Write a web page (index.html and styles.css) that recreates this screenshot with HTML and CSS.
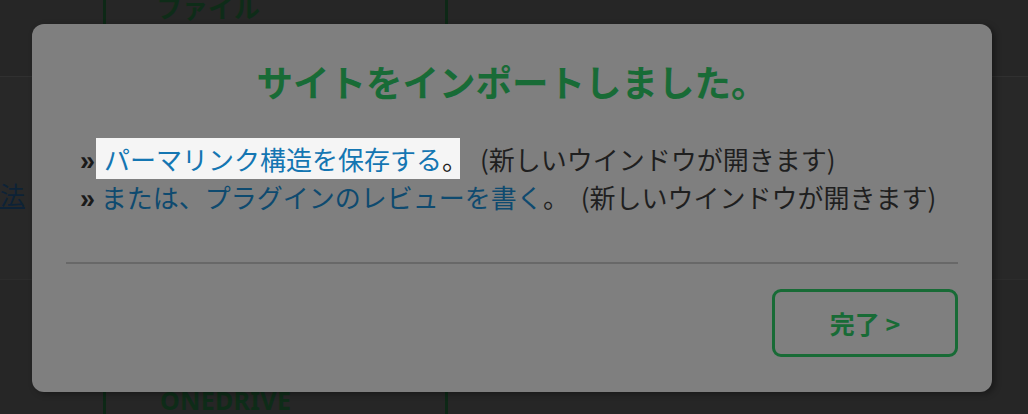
FILE: index.html
```html
<!DOCTYPE html>
<html lang="ja">
<head>
<meta charset="utf-8">
<title>サイトをインポートしました</title>
<link rel="stylesheet" href="styles.css">
</head>
<body>
<div class="page">
  <div class="row row-top">
    <div class="cell"></div>
    <div class="cell mid"><span class="bg-label">ファイル</span></div>
    <div class="cell"></div>
  </div>
  <div class="row row-mid">
    <div class="cell"><a class="bg-link" href="#">方法</a></div>
    <div class="cell mid"></div>
    <div class="cell"></div>
  </div>
  <div class="row row-bot">
    <div class="cell"></div>
    <div class="cell mid"><span class="bg-label latin">ONEDRIVE</span></div>
    <div class="cell"></div>
  </div>
</div>

<div class="modal" role="dialog">
  <h2 class="title">サイトをインポートしました。</h2>
  <ul class="links">
    <li><span class="raquo">»</span><span class="hl"><a class="link focus" href="#">パーマリンク構造を保存する</a><span class="stop">。</span></span> <span class="note">(新しいウインドウが開きます)</span></li>
    <li><span class="raquo">»</span> <a class="link" href="#">または、プラグインのレビューを書く</a>。 <span class="note">(新しいウインドウが開きます)</span></li>
  </ul>
  <hr class="divider">
  <div class="footer">
    <button class="done" type="button">完了 &gt;</button>
  </div>
</div>
</body>
</html>
```

FILE: styles.css
```css
html, body {
  margin: 0;
  padding: 0;
}
body {
  width: 1028px;
  height: 414px;
  overflow: hidden;
  background: #262626;
  font-family: "Noto Sans CJK JP", "Noto Sans", sans-serif;
  position: relative;
}

/* background page */
.page {
  display: flex;
  flex-direction: column;
}
.row {
  display: grid;
  grid-template-columns: 103px 345px 1fr;
}
.row-top { height: 76px; border-bottom: 1px solid #303030; }
.row-mid { height: 202px; border-bottom: 1px solid #2c2c2c; background: #282828; }
.row-bot { height: 134px; }
.cell { display: flex; }
.mid {
  border-left: 3px solid #0d2816;
  border-right: 3px solid #0d2816;
  padding-left: 50px;
}
.row-top .mid { align-items: flex-start; }
.row-bot .mid { align-items: flex-end; }
.bg-label {
  font-size: 26px;
  font-weight: 700;
  color: #0e2c18;
  line-height: 1;
  margin-top: -6px;
}
.bg-label.latin {
  font-family: "Noto Sans", sans-serif;
  font-size: 25px;
  letter-spacing: 0.3px;
  margin-bottom: 1px;
  margin-left: 4px;
}
.row-mid .cell:first-child { align-items: flex-start; }
.bg-link {
  font-size: 25px;
  line-height: 1;
  color: #0d2236;
  margin-left: -25px;
  margin-top: 105px;
  text-decoration: underline;
}

/* modal */
.modal {
  position: absolute;
  left: 32px;
  top: 24px;
  width: 960px;
  box-sizing: border-box;
  padding: 37px 34px 35px;
  background: #7f7f7f;
  border-radius: 12px;
  box-shadow: 3px 2px 6px rgba(0,0,0,0.35);
  display: flex;
  flex-direction: column;
}
.title {
  margin: 0;
  text-align: center;
  font-size: 36.5px;
  line-height: 42px;
  font-weight: 700;
  color: #186b36;
}
.links {
  list-style: none;
  margin: 37px 0 0 14px;
  padding: 0;
  font-size: 26px;
  line-height: 38px;
  color: #1f1f1f;
}
.raquo {
  font-family: "Liberation Sans", sans-serif;
  font-weight: 700;
  font-size: 27px;
  line-height: 20px;
  color: #1a1a1a;
}
.link {
  color: #0e4a6f;
  text-decoration: none;
}
.hl {
  background: #f5f5f5;
  padding: 2px 0 2px 8px;
  margin-left: 1px;
  margin-right: 8px;
}
.link.focus {
  color: #1476b2;
}
.stop {
  margin-right: -8px;
}
.note {
  margin-left: 6px;
}
.divider {
  margin: 46px 0 0;
  border: 0;
  height: 2px;
  background: #686868;
}
.footer {
  display: flex;
  justify-content: flex-end;
  margin-top: 25px;
}
.done {
  width: 186px;
  height: 68px;
  box-sizing: border-box;
  border: 3px solid #186b36;
  border-radius: 9px;
  background: transparent;
  color: #186b36;
  font-family: "Noto Sans CJK JP", "Noto Sans", sans-serif;
  font-size: 25px;
  font-weight: 700;
  padding: 0;
}
```
